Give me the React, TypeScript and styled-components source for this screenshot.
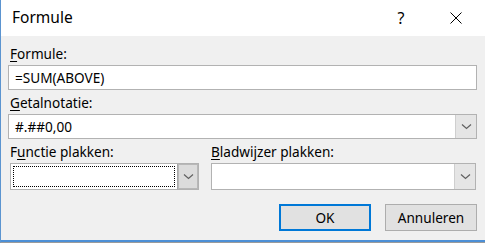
import React from "react";
import styled, { createGlobalStyle } from "styled-components";

const Global = createGlobalStyle`
  html, body { margin: 0; padding: 0; background: #f0f0f0; }
  body { font-family: "Noto Sans", "Open Sans", sans-serif; }
`;

const Window = styled.div`
  width: 485px;
  height: 243px;
  box-sizing: border-box;
  display: flex;
  flex-direction: column;
  border-left: 1px solid #5b94d0;
  border-bottom: 1px solid #9b9b9b;
  background: #f0f0f0;
`;

const TitleBar = styled.div`
  height: 36px;
  flex: none;
  background: #ffffff;
  display: flex;
  align-items: center;
  padding-left: 11px;
`;

const Title = styled.div`
  flex: 1;
  font-size: 15.5px;
  color: #000;
  padding-bottom: 2px;
`;

const TitleButton = styled.div<{ $w: number }>`
  width: ${(p) => p.$w}px;
  height: 36px;
  display: flex;
  align-items: center;
  justify-content: center;
  font-size: 16px;
  color: #000;
`;

const Body = styled.div`
  flex: 1;
  display: flex;
  flex-direction: column;
  padding: 8px 8px 0 7px;
  border-bottom: 2px solid #4c8fd6;
`;

const Label = styled.div<{ $indent?: number }>`
  height: 19px;
  font-size: 13.6px;
  line-height: 19px;
  color: #000;
  padding-left: ${(p) => p.$indent ?? 2}px;
  white-space: nowrap;
  u { text-decoration: underline; text-underline-offset: 2px; }
`;

const Field = styled.div<{ $h?: number }>`
  height: ${(p) => p.$h ?? 25}px;
  box-sizing: border-box;
  margin-top: 2px;
  background: #fff;
  border: 1px solid #b2b2b2;
  display: flex;
  align-items: stretch;
`;

const FieldText = styled.div`
  flex: 1;
  font-size: 13.6px;
  line-height: 23px;
  padding-left: 6px;
  color: #000;
`;

const FocusRect = styled.div`
  flex: 1;
  margin: 2px;
  border: 1px dotted #000;
`;

const DropButton = styled.div<{ $focus?: boolean }>`
  width: 21px;
  flex: none;
  box-sizing: border-box;
  background: ${(p) => (p.$focus ? "#dcdcdc" : "#e5e5e5")};
  border-left: 1px solid ${(p) => (p.$focus ? "#a8a8a8" : "#cfcfcf")};
  ${(p) => (p.$focus ? "box-shadow: inset 0 0 0 1px #b8b8b8;" : "")}
  display: flex;
  align-items: center;
  justify-content: center;
`;

const Spacer = styled.div<{ $h: number }>`
  height: ${(p) => p.$h}px;
  flex: none;
`;

const Row = styled.div`
  display: flex;
`;

const Column = styled.div<{ $w: number; $ml?: number }>`
  width: ${(p) => p.$w}px;
  margin-left: ${(p) => p.$ml ?? 0}px;
  display: flex;
  flex-direction: column;
`;

const ButtonRow = styled.div`
  display: flex;
  justify-content: flex-end;
  gap: 14px;
  margin-top: 14px;
`;

const Button = styled.div<{ $primary?: boolean }>`
  width: 92px;
  height: 27px;
  box-sizing: border-box;
  background: #e1e1e1;
  border: ${(p) => (p.$primary ? "2px solid #0078d7" : "1px solid #adadad")};
  display: flex;
  align-items: center;
  justify-content: center;
  font-size: 13.6px;
  color: #000;
`;

const Chevron = () => (
  <svg width="11" height="7" viewBox="0 0 11 7">
    <path d="M1 1.5 L5.5 5.5 L10 1.5" fill="none" stroke="#606060" strokeWidth="1.2" />
  </svg>
);

const CloseIcon = () => (
  <svg width="12" height="12" viewBox="0 0 12 12">
    <path d="M0.5 0.5 L11.5 11.5 M11.5 0.5 L0.5 11.5" stroke="#000" strokeWidth="1" />
  </svg>
);

export default function App() {
  return (
    <>
      <Global />
      <Window>
        <TitleBar>
          <Title>Formule</Title>
          <TitleButton $w={52}>?</TitleButton>
          <TitleButton $w={58}>
            <CloseIcon />
          </TitleButton>
        </TitleBar>
        <Body>
          <Label>
            <u>F</u>ormule:
          </Label>
          <Field>
            <FieldText>=SUM(ABOVE)</FieldText>
          </Field>
          <Spacer $h={3} />
          <Label>
            <u>G</u>etalnotatie:
          </Label>
          <Field>
            <FieldText>#.##0,00</FieldText>
            <DropButton>
              <Chevron />
            </DropButton>
          </Field>
          <Spacer $h={3} />
          <Row>
            <Column $w={189} $ml={2}>
              <Label $indent={0}>
                F<u>u</u>nctie plakken:
              </Label>
              <Field $h={27}>
                <FocusRect />
                <DropButton $focus>
                  <Chevron />
                </DropButton>
              </Field>
            </Column>
            <Column $w={265} $ml={12}>
              <Label $indent={0}>
                <u>B</u>ladwijzer plakken:
              </Label>
              <Field $h={27}>
                <FieldText />
                <DropButton>
                  <Chevron />
                </DropButton>
              </Field>
            </Column>
          </Row>
          <ButtonRow>
            <Button $primary>OK</Button>
            <Button>Annuleren</Button>
          </ButtonRow>
        </Body>
      </Window>
    </>
  );
}
